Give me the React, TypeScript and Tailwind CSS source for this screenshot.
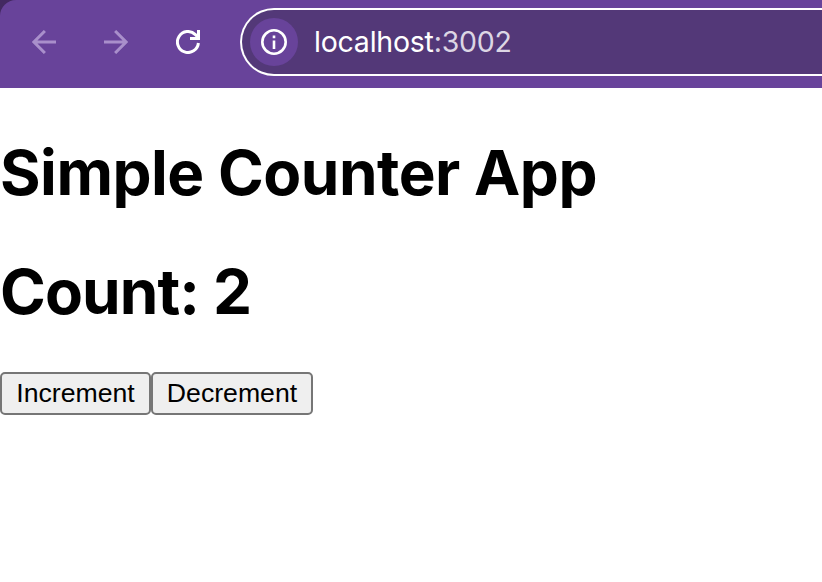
import { useState } from "react";

function BackArrow() {
  return (
    <svg className="block size-6" viewBox="0 0 24 24" fill="none" stroke="#a98fcb" strokeWidth="3">
      <path d="M24 12H2M12.9 1 1.9 12l11 11" />
    </svg>
  );
}

function ForwardArrow() {
  return (
    <svg className="block size-6" viewBox="0 0 24 24" fill="none" stroke="#a98fcb" strokeWidth="3">
      <path d="M0 12h22M11.1 1l11 11-11 11" />
    </svg>
  );
}

function ReloadIcon() {
  return (
    <svg className="block size-6" viewBox="0 0 24 24" fill="none" stroke="#fff" strokeWidth="3">
      <path d="M22.4 13A10.5 10.5 0 1 1 19.4 4.6L22 7.2" />
      <path d="M22.5 0v8.5H14" />
    </svg>
  );
}

function InfoIcon() {
  return (
    <svg className="block size-[26px]" viewBox="0 0 26 26" fill="none" stroke="#fff">
      <circle cx="13" cy="13" r="11.7" strokeWidth="2.6" />
      <path d="M13 11.5v8.5M13 6.6v2.6" strokeWidth="2.6" />
    </svg>
  );
}

const buttonClass =
  "h-[43px] rounded-[5px] border-2 border-[#767676] bg-[#efefef] text-[26.67px] leading-[39px] text-black [font-family:'Liberation_Sans',Arial,sans-serif]";

export default function App() {
  const [count, setCount] = useState(2);

  return (
    <div className="h-[582px] w-[822px] overflow-hidden bg-white">
      <header className="bg-[#432961]">
        <div className="flex h-[88px] items-start rounded-tl-[16px] bg-[#68439a] pt-2 pl-8">
          <nav className="flex h-[68px] items-center gap-12">
            <BackArrow />
            <ForwardArrow />
            <ReloadIcon />
          </nav>
          <div className="ml-10 flex h-[68px] flex-1 items-center rounded-l-full border-2 border-r-0 border-white bg-[#533878] pl-2">
            <div className="flex size-12 items-center justify-center rounded-full bg-[#68439a]">
              <InfoIcon />
            </div>
            <div className="ml-4 text-[28.5px] leading-9 tracking-[-0.23px] whitespace-nowrap text-white [font-family:Inter,sans-serif]">
              localhost<span className="text-[#dcd6e4]">:3002</span>
            </div>
          </div>
        </div>
      </header>
      <main className="pt-[47px] [font-family:Inter,sans-serif]">
        <h1 className="h-[76px] text-[62px] leading-[76px] font-bold tracking-[-0.5px] whitespace-nowrap text-black">
          Simple Counter App
        </h1>
        <h1 className="mt-[43px] h-[76px] text-[62px] leading-[76px] font-bold tracking-[-0.9px] whitespace-nowrap text-black">
          Count: {count}
        </h1>
        <div className="mt-[42px] flex">
          <button className={`${buttonClass} w-[151px]`} onClick={() => setCount(count + 1)}>
            Increment
          </button>
          <button className={`${buttonClass} w-[162px]`} onClick={() => setCount(count - 1)}>
            Decrement
          </button>
        </div>
      </main>
    </div>
  );
}
